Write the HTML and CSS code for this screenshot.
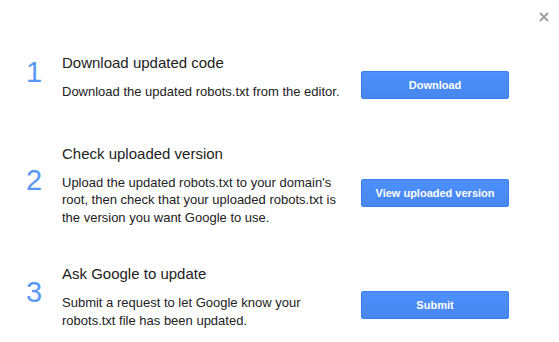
FILE: index.html
```html
<!DOCTYPE html>
<html lang="en">
<head>
    <meta charset="UTF-8">
    <title>Submit updated robots.txt</title>
    <link rel="stylesheet" href="styles.css">
</head>
<body>
    <div class="dialog">
        <div class="dialog-top">
            <button class="close-btn" aria-label="Close">
                <svg width="10" height="10" viewBox="0 0 10 10">
                    <path d="M1 1 L9 9 M9 1 L1 9" stroke="#a0a0a0" stroke-width="2"/>
                </svg>
            </button>
        </div>
        <div class="steps">
            <div class="step step-first">
                <div class="step-num">1</div>
                <div class="step-text">
                    <div class="step-title">Download updated code</div>
                    <div class="step-desc">Download the updated robots.txt from the editor.</div>
                </div>
                <button class="action-btn">Download</button>
            </div>
            <div class="step">
                <div class="step-num">2</div>
                <div class="step-text">
                    <div class="step-title">Check uploaded version</div>
                    <div class="step-desc">Upload the updated robots.txt to your domain's root, then check that your uploaded robots.txt is the version you want Google to use.</div>
                </div>
                <button class="action-btn">View uploaded version</button>
            </div>
            <div class="step">
                <div class="step-num">3</div>
                <div class="step-text">
                    <div class="step-title">Ask Google to update</div>
                    <div class="step-desc">Submit a request to let Google know your robots.txt file has been updated.</div>
                </div>
                <button class="action-btn">Submit</button>
            </div>
        </div>
    </div>
</body>
</html>
```

FILE: styles.css
```css
* {
    margin: 0;
    padding: 0;
    box-sizing: border-box;
}

body {
    background: #fff;
    color: #222;
    font-family: 'Liberation Sans', Arial, sans-serif;
}

.dialog {
    width: 559px;
    height: 342px;
    padding: 12px 0 0 26px;
}

.dialog-top {
    display: flex;
    justify-content: flex-end;
    padding-right: 10px;
    height: 41px;
}

.close-btn {
    width: 10px;
    height: 10px;
    border: none;
    background: transparent;
    cursor: pointer;
    display: flex;
}

.steps {
    display: flex;
    flex-direction: column;
    gap: 38px;
}

.step {
    display: flex;
    align-items: center;
}

.step-first {
    margin-bottom: 5px;
}

.step-num {
    width: 36px;
    font-size: 29px;
    line-height: 29px;
    color: #5a97f5;
    margin-bottom: 8px;
}

.step-text {
    width: 280px;
    margin-right: 19px;
}

.step-title {
    font-size: 15px;
    line-height: 20px;
    margin-bottom: 10px;
}

.step-desc {
    font-size: 13px;
    line-height: 17.5px;
}

.action-btn {
    width: 148px;
    height: 28px;
    margin-top: 16px;
    background: linear-gradient(#4d90fe, #4787ed);
    border: 1px solid #3b80f0;
    border-radius: 2px;
    color: #fff;
    font-family: 'Liberation Sans', Arial, sans-serif;
    font-size: 11px;
    font-weight: bold;
    cursor: pointer;
}
```
